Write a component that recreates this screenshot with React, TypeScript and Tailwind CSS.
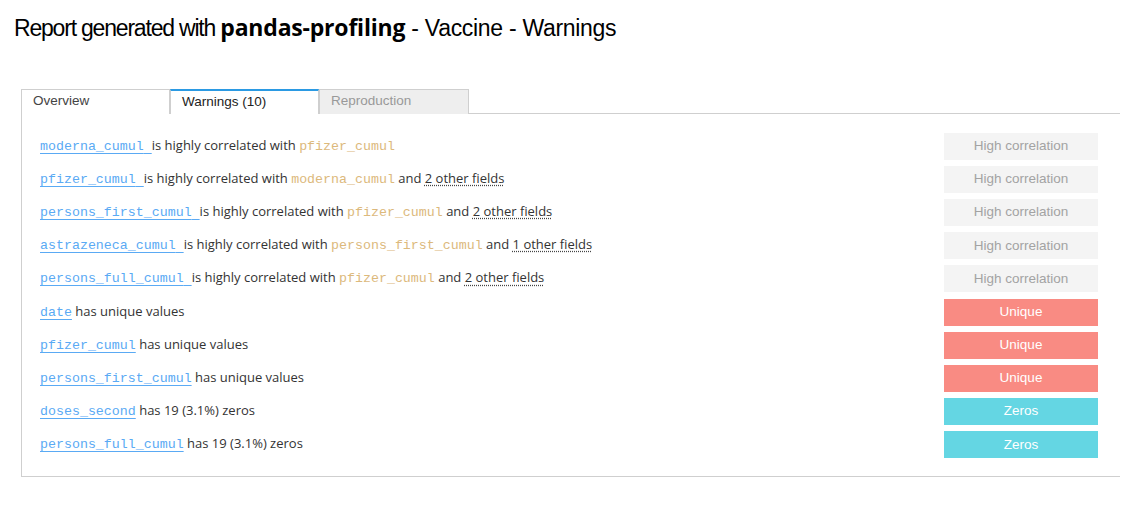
import React from "react";

type Warning = {
  col: string;
  trail?: boolean;
  rest: React.ReactNode;
  kind: "corr" | "unique" | "zeros";
};

const Tan = ({ children }: { children: React.ReactNode }) => (
  <code className="font-['Liberation_Mono',monospace] text-[13.3px] text-[#dcb97c]">{children}</code>
);

const Other = ({ n }: { n: number }) => (
  <abbr className="underline decoration-dotted decoration-[#444] underline-offset-2">{n} other fields</abbr>
);

const warnings: Warning[] = [
  { col: "moderna_cumul", trail: true, kind: "corr", rest: <>is highly correlated with <Tan>pfizer_cumul</Tan></> },
  { col: "pfizer_cumul", trail: true, kind: "corr", rest: <>is highly correlated with <Tan>moderna_cumul</Tan> and <Other n={2} /></> },
  { col: "persons_first_cumul", trail: true, kind: "corr", rest: <>is highly correlated with <Tan>pfizer_cumul</Tan> and <Other n={2} /></> },
  { col: "astrazeneca_cumul", trail: true, kind: "corr", rest: <>is highly correlated with <Tan>persons_first_cumul</Tan> and <Other n={1} /></> },
  { col: "persons_full_cumul", trail: true, kind: "corr", rest: <>is highly correlated with <Tan>pfizer_cumul</Tan> and <Other n={2} /></> },
  { col: "date", kind: "unique", rest: <>has unique values</> },
  { col: "pfizer_cumul", kind: "unique", rest: <>has unique values</> },
  { col: "persons_first_cumul", kind: "unique", rest: <>has unique values</> },
  { col: "doses_second", kind: "zeros", rest: <>has 19 (3.1%) zeros</> },
  { col: "persons_full_cumul", kind: "zeros", rest: <>has 19 (3.1%) zeros</> },
];

const badge = {
  corr: { label: "High correlation", cls: "bg-[#f4f4f4] text-[#a3a3a3]" },
  unique: { label: "Unique", cls: "bg-[#f98b83] text-white" },
  zeros: { label: "Zeros", cls: "bg-[#64d6e3] text-white" },
};

export default function App() {
  return (
    <div className="h-[530px] w-[1139px] bg-white font-['Open_Sans',sans-serif] text-[13px] text-[#333]">
      <div className="pl-[14px] pt-[10px] font-['Liberation_Sans',sans-serif] text-[23px] tracking-[-1.2px] text-black">
        Report generated with{" "}
        <span className="font-['Open_Sans',sans-serif] font-bold tracking-[-0.2px]">pandas-profiling</span>
        <span className="tracking-[-0.3px]"> - Vaccine - Warnings</span>
      </div>

      <div className="ml-[21px] mt-[43px] w-[1099px]">
        <div className="flex h-[25px] border-b border-[#cfcfcf] font-['Liberation_Sans',sans-serif] text-[13.5px]">
          <div className="mb-[-1px] flex w-[149px] items-center border border-b-0 border-[#cfcfcf] bg-white pl-[11px] text-[#444]">
            Overview
          </div>
          <div className="mb-[-1px] flex w-[149px] items-center border-x border-t-2 border-x-[#cfcfcf] border-t-[#2b9ae3] bg-white pl-[11px] text-[#222]">
            Warnings (10)
          </div>
          <div className="mb-[-1px] flex w-[150px] items-center border border-b-0 border-[#cfcfcf] bg-[#eeeeee] pl-[11px] text-[#999]">
            Reproduction
          </div>
        </div>

        <div className="border-b border-l border-[#cfcfcf] pb-[15px] pl-[18px] pr-[22px] pt-[16px]">
          {warnings.map((w, i) => (
            <div key={i} className="flex h-[33.2px] items-center justify-between">
              <div className="whitespace-nowrap">
                <a className="font-['Liberation_Mono',monospace] text-[13.3px] text-[#5aaaf4] underline decoration-1 underline-offset-[3px]">
                  {w.col}
                  {w.trail ? " " : ""}
                </a>
                {w.trail ? "" : " "}
                {w.rest}
              </div>
              <div
                className={`flex h-[27px] w-[154px] items-center justify-center font-['Liberation_Sans',sans-serif] text-[13.5px] ${badge[w.kind].cls}`}
              >
                {badge[w.kind].label}
              </div>
            </div>
          ))}
        </div>
      </div>
    </div>
  );
}
